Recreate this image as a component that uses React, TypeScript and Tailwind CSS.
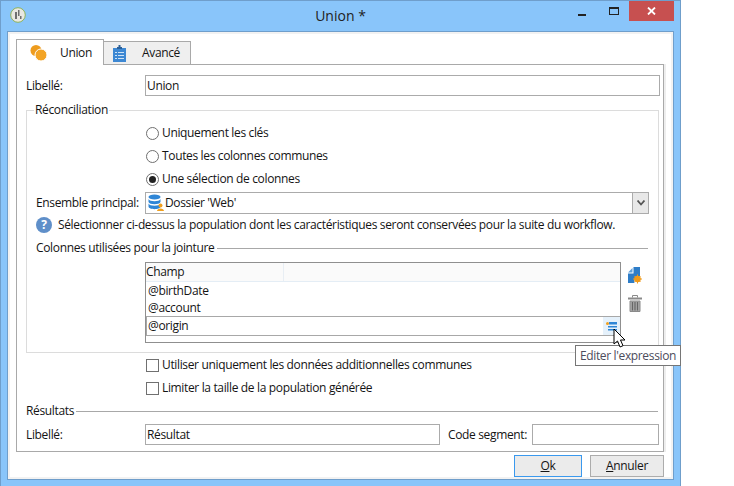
import React from "react";

function Radio({ checked }: { checked?: boolean }) {
  return (
    <span className="w-[13px] h-[13px] rounded-full border border-[#6f6f6f] bg-white flex items-center justify-center shrink-0">
      {checked && <span className="w-[7px] h-[7px] rounded-full bg-[#222]" />}
    </span>
  );
}

function Check() {
  return <span className="w-[13px] h-[13px] border border-[#707070] bg-white shrink-0" />;
}

function RadioRow({ label, checked, cls }: { label: string; checked?: boolean; cls: string }) {
  return (
    <div className={`flex items-center gap-[3px] h-[16px] ml-[110px] ${cls}`}>
      <Radio checked={checked} />
      <span>{label}</span>
    </div>
  );
}

function CheckRow({ label, cls }: { label: string; cls: string }) {
  return (
    <div className={`flex items-center gap-[3px] h-[16px] ml-[120px] ${cls}`}>
      <Check />
      <span>{label}</span>
    </div>
  );
}

function Input({ value, cls }: { value?: string; cls: string }) {
  return (
    <div className={`h-[21px] shrink-0 border border-[#ababab] bg-white pl-[1px] flex items-center ${cls}`}>{value}</div>
  );
}

function Sep({ label }: { label: string }) {
  return (
    <div className="flex items-center gap-[2px] h-[16px]">
      <span>{label}</span>
      <span className="flex-1 h-px bg-[#a8a8a8]" />
    </div>
  );
}

function Coins() {
  return (
    <svg width="18" height="18" viewBox="0 0 18 18">
      <circle cx="6" cy="6.500" r="5.500" fill="#ee9c1e" />
      <circle cx="11" cy="11" r="6" fill="#f3a425" stroke="#fff" strokeWidth="1" />
    </svg>
  );
}

function Clipboard() {
  return (
    <svg width="14" height="17" viewBox="0 0 14 17">
      <rect x="0" y="3" width="13" height="14" fill="#3d88d3" />
      <path d="M4 4V2h1.500V0h2v2H9v2z" fill="#2c5f96" />
      <rect x="2" y="7" width="2" height="1" fill="#cfe3f6" />
      <rect x="5" y="7" width="6" height="1" fill="#cfe3f6" />
      <rect x="2" y="10" width="2" height="1" fill="#cfe3f6" />
      <rect x="5" y="10" width="6" height="1" fill="#cfe3f6" />
      <rect x="2" y="13" width="2" height="1" fill="#cfe3f6" />
      <rect x="5" y="13" width="6" height="1" fill="#cfe3f6" />
    </svg>
  );
}

function AppIcon() {
  return (
    <svg width="16" height="16" viewBox="0 0 16 16">
      <circle cx="8" cy="8" r="7.300" fill="#e9e8e2" stroke="#8fb35a" />
      <path d="M5 5h2v7H5zM8 3h1.500v6H8zM10 9h1.500v3H10z" fill="#6f6f6f" />
    </svg>
  );
}

function Db() {
  return (
    <svg width="16" height="18" viewBox="0 0 16 18" className="shrink-0">
      <ellipse cx="6.500" cy="3" rx="6" ry="2.500" fill="#2f86d6" />
      <path d="M0.500 5c1 3 11 3 12 0v3c-1 3-11 3-12 0z" fill="#2f86d6" />
      <path d="M0.500 9.500c1 3 11 3 12 0v3c0 3.500-12 3.500-12 0z" fill="#2f86d6" />
      <circle cx="12.500" cy="11.500" r="2" fill="#f0a020" />
      <path d="M9 17c0-3.500 7-3.500 7 0z" fill="#f0a020" />
    </svg>
  );
}

function Help() {
  return (
    <span className="w-[16px] h-[16px] rounded-full bg-[#5f8fc9] text-white flex items-center justify-center text-[12px] font-bold leading-none shrink-0">
      ?
    </span>
  );
}

function AddCol() {
  return (
    <svg width="14" height="17" viewBox="0 0 14 17">
      <path d="M0 5.500L4.500 1v4.500z" fill="#5a9fdc" />
      <path d="M5.500 0H12v9.500a5 5 0 0 0-5.500 6.500H0V6.500h5.500z" fill="#2e7dc8" />
      <circle cx="9.500" cy="12" r="3.300" fill="#f09a1a" />
      <path d="M9.500 7.500v9M5 12h9M6.500 9l6 6M12.500 9l-6 6" stroke="#f09a1a" strokeWidth="1" />
    </svg>
  );
}

function Trash() {
  return (
    <svg width="14" height="17" viewBox="0 0 14 17" fill="none" stroke="#8a8a8a">
      <path d="M0 3.500h14" strokeWidth="2" />
      <path d="M4.500 2.500V0.500h5v2" strokeWidth="1" />
      <path d="M2 6h10v10.500H2z" fill="#a8a8a8" strokeWidth="1" />
      <path d="M4.500 7v8.500M7 7v8.500M9.500 7v8.500" strokeWidth="1.200" stroke="#666" />
    </svg>
  );
}

function ExprIcon() {
  return (
    <svg width="11" height="9" viewBox="0 0 11 9">
      <rect x="3" y="0" width="8" height="2.500" fill="#2f86d6" />
      <circle cx="1.500" cy="1.500" r="1.500" fill="#f0a020" />
      <rect x="2" y="4" width="9" height="1.500" fill="#2f86d6" />
      <rect x="2" y="7" width="9" height="1.500" fill="#2f86d6" />
    </svg>
  );
}

function Cursor() {
  return (
    <svg width="13" height="20" viewBox="0 0 13 20" className="absolute left-[613px] top-[328px]">
      <path d="M1 1v15l3.500-3 2.500 6 3-1.300-2.500-5.700H12z" fill="#fff" stroke="#000" strokeWidth="1" />
    </svg>
  );
}

export default function App() {
  return (
    <div
      className="relative w-[734px] h-[486px] bg-white overflow-hidden text-[12px] leading-[16px] text-[#141414]"
      style={{ fontFamily: '"Open Sans", "Noto Sans", sans-serif', letterSpacing: "-0.35px" }}
    >
      <div className="w-[681px] h-[486px] bg-[#89c5fa] border-x border-t border-[#6f9ecb] flex flex-col px-[6px]">
        <div className="h-[30px] shrink-0 flex items-center">
          <div className="flex-1 flex">
            <span className="ml-[3px] -mt-[3px]"><AppIcon /></span>
          </div>
          <span className="text-center text-[14px] text-[#222] -mt-[1px] tracking-normal">Union *</span>
          <div className="flex-1 flex justify-end self-start">
            <span className="w-[46px] h-[20px] flex items-center justify-center">
              <span className="w-[8px] h-[2px] bg-[#222] mt-[7px]" />
            </span>
            <span className="w-[18px] h-[20px] flex items-center justify-center">
              <span className="w-[10px] h-[8px] border border-t-2 border-[#222]" />
            </span>
            <span className="ml-[6px] w-[45px] h-[20px] bg-[#c75050] text-white flex items-center justify-center">
              <svg width="9" height="8" viewBox="0 0 9 8"><path d="M1 0.500L8 7.500M8 0.500L1 7.500" stroke="#fff" strokeWidth="1.800" /></svg>
            </span>
          </div>
        </div>

        <div className="h-[449px] shrink-0 bg-white border border-[#6f9ecb] shadow-[inset_0_0_0_2px_#f2f2f2] pt-[7px] px-[8px] flex flex-col">
          <div className="flex items-end h-[26px] shrink-0 relative z-10 -mb-px">
            <div className="w-[88px] h-[26px] border border-b-0 border-[#a9a9a9] bg-white flex items-center pl-[13px] gap-[12px]">
              <Coins />
              <span>Union</span>
            </div>
            <div className="w-[87px] h-[24px] border border-l-0 border-[#a9a9a9] bg-[#efefef] flex items-center pl-[9px] gap-[15px]">
              <Clipboard />
              <span>Avancé</span>
            </div>
          </div>

          <div className="h-[388px] w-[648px] border border-[#a9a9a9] shadow-[2px_0_0_#eeeeee] pt-[10px] pl-[9px] pr-[4px] flex flex-col shrink-0">
            <div className="flex items-center h-[21px]">
              <span className="w-[119px] shrink-0">Libellé:</span>
              <Input value="Union" cls="w-[515px]" />
            </div>

            <fieldset className="mt-[6px] w-[632px] h-[251px] shrink-0 border border-[#dcdcdc] px-[9px] pb-0 pt-0">
              <legend className="ml-[-2px] px-[1px] h-[16px]">Réconciliation</legend>
              <RadioRow label="Uniquement les clés" cls="mt-[7px]" />
              <RadioRow label="Toutes les colonnes communes" cls="mt-[7px]" />
              <RadioRow label="Une sélection de colonnes" checked cls="mt-[7px]" />
              <div className="flex items-center h-[22px] mt-[5px]">
                <span className="w-[109px] shrink-0">Ensemble principal:</span>
                <div className="w-[504px] h-[22px] border border-[#ababab] flex items-center pl-[2px] gap-[1px]">
                  <Db />
                  <span className="flex-1">Dossier 'Web'</span>
                  <span className="w-[16px] h-[20px] bg-[#e8e8e8] border-l border-[#ababab] flex items-center justify-center">
                    <svg width="8" height="6" viewBox="0 0 8 6"><path d="M0.500 0.500L4 4.500L7.500 0.500" fill="none" stroke="#555" strokeWidth="1.800" /></svg>
                  </span>
                </div>
              </div>
              <div className="flex items-center h-[16px] mt-[3px] gap-[6px]">
                <Help />
                <span>Sélectionner ci-dessus la population dont les caractéristiques seront conservées pour la suite du workflow.</span>
              </div>
              <div className="mt-[7px] w-[612px]"><Sep label="Colonnes utilisées pour la jointure" /></div>

              <div className="flex mt-[6px] ml-[109px]">
                <div className="w-[476px] h-[81px] border border-[#8f8f8f] flex flex-col">
                  <div className="h-[19px] shrink-0 bg-[#fafafa] border-b border-[#e4edf5] flex items-center">
                    <span className="w-[138px] h-full border-r border-[#e8eef4] flex items-center">Champ</span>
                  </div>
                  <div className="h-[17px] shrink-0 flex items-center pl-[2px]">@birthDate</div>
                  <div className="h-[17px] shrink-0 flex items-center pl-[2px]">@account</div>
                  <div className="h-[20px] shrink-0 border border-[#a8a8a8] border-r-0 flex items-center pl-[1px] justify-between">
                    <span>@origin</span>
                    <span className="w-[17px] h-[18px] bg-[#e5f1fb] flex items-center justify-center"><ExprIcon /></span>
                  </div>
                </div>
                <div className="ml-[7px] flex flex-col gap-[11px] pt-[5px]">
                  <AddCol />
                  <Trash />
                </div>
              </div>
            </fieldset>

            <CheckRow label="Utiliser uniquement les données additionnelles communes" cls="mt-[4px]" />
            <CheckRow label="Limiter la taille de la population générée" cls="mt-[7px]" />
            <div className="mt-[7px] w-[632px]"><Sep label="Résultats" /></div>
            <div className="flex items-center h-[21px] mt-[5px]">
              <span className="w-[119px] shrink-0">Libellé:</span>
              <Input value="Résultat" cls="w-[295px]" />
              <span className="ml-[8px] w-[84px] shrink-0">Code segment:</span>
              <Input cls="w-[127px]" />
            </div>
          </div>

          <div className="flex justify-end gap-[8px] mt-[3px] w-[648px]">
            <div className="w-[68px] h-[22px] border border-[#3a99ee] bg-[#ebebeb] flex items-center justify-center"><span><span className="underline">O</span>k</span></div>
            <div className="w-[74px] h-[22px] border border-[#acacac] bg-[#ebebeb] flex items-center justify-center"><span><span className="underline">A</span>nnuler</span></div>
          </div>
        </div>
      </div>

      <div className="absolute left-[575px] top-[345px] w-[106px] h-[21px] border border-[#767676] bg-white flex items-center justify-center text-[#4c4c5c]">
        Editer l'expression
      </div>
      <Cursor />
    </div>
  );
}
